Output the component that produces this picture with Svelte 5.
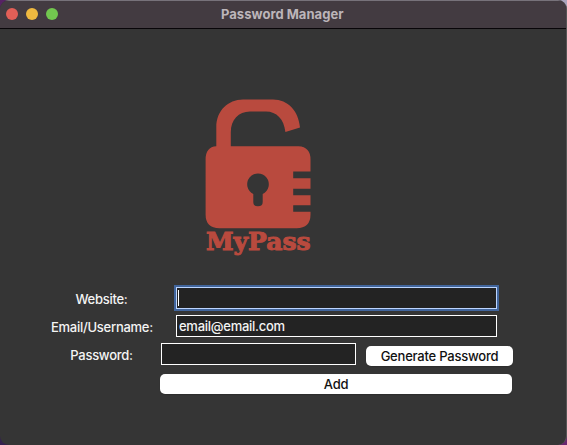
<script>
  let website = $state('');
  let email = $state('email@email.com');
  let password = $state('');
</script>

<div class="desktop">
  <main class="window">
    <header>
      <div class="lights">
        <i class="close"></i><i class="minimise"></i><i class="zoom"></i>
      </div>
      <h1>Password Manager</h1>
    </header>

    <svg class="logo" width="110" height="162" viewBox="203 97 110 162" role="img" aria-label="MyPass">
      <path
        fill="#b94a3e"
        fill-rule="evenodd"
        d="M216.3 146.3V127C216.3 111 228 99.6 243 99.6H273C288 99.6 298.500 111 300 127.500L285.400 132C284 119 276.500 111.500 266 111.500H250C238.500 111.500 230.800 120 230.800 132V146.300H298.500Q310.500 147 310.500 159.500V171.500H293.200V178.300H310.500V188.700H293.200V195.300H310.500V205.300H293.200V211.800H310.500V214.500Q310.500 228.200 296.500 228.200H219.500Q205.600 228.200 205.600 214.500V159.500Q205.600 147 216.300 146.300ZM253.300 194V202Q253.300 206.300 258 206.300T262.700 202V194A10.800 10.800 0 1 0 253.300 194Z"
      />
      <text x="206" y="250.300" textLength="104.500" lengthAdjust="spacingAndGlyphs">MyPass</text>
    </svg>

    <form onsubmit={(e) => e.preventDefault()}>
      <div class="row website">
        <label for="website"><span>Website:</span></label>
        <div class="field focused">
          <span class="caret"></span>
          <input id="website" bind:value={website} />
        </div>
      </div>
      <div class="row email">
        <label for="email"><span>Email/Username:</span></label>
        <div class="field"><input id="email" bind:value={email} /></div>
      </div>
      <div class="row password">
        <label for="password"><span>Password:</span></label>
        <div class="field short"><input id="password" bind:value={password} /></div>
        <button type="button" class="generate">Generate Password</button>
      </div>
      <button class="add">Add</button>
    </form>
  </main>
</div>

<style>
  :global(body) {
    margin: 0;
  }
  .desktop {
    width: 567px;
    height: 445px;
    overflow: hidden;
    background: linear-gradient(50deg, #34204d, #68256f 60%, #a9a4bd 95%);
    font: 500 13px/16px Inter, 'Liberation Sans', sans-serif;
    letter-spacing: -0.27px;
    color: #f4f4f4;
  }
  .window {
    box-sizing: border-box;
    height: 445px;
    display: flex;
    flex-direction: column;
    overflow: hidden;
    border-radius: 9px;
    background: #353535;
    border-right: 1px solid #555;
  }
  header {
    box-sizing: border-box;
    height: 29px;
    flex: none;
    display: flex;
    align-items: center;
    padding-bottom: 1px;
    background: #433b41;
    border-top: 1px solid #77727a;
    border-bottom: 1px solid #080508;
  }
  .lights {
    display: flex;
    gap: 8px;
    width: 52px;
    padding-left: 6px;
    margin-bottom: 1px;
  }
  .lights i {
    width: 12px;
    height: 12px;
    border-radius: 50%;
  }
  .close { background: #e25f57; }
  .minimise { background: #efb940; }
  .zoom { background: #72c74f; }
  h1 {
    margin: 0 0 1px 163px;
    font-size: 13px;
    font-weight: 700;
    line-height: 16px;
    letter-spacing: 0.03px;
    color: #bcb5ba;
    white-space: nowrap;
  }
  .logo {
    flex: none;
    margin: 68px 0 0 203px;
  }
  .logo text {
    font: 700 24px 'DejaVu Serif', serif;
    letter-spacing: 0;
    fill: #b94a3e;
    stroke: #b94a3e;
    stroke-width: 1px;
  }
  form {
    margin-top: 28px;
    display: flex;
    flex-direction: column;
  }
  .row {
    display: flex;
    height: 22px;
  }
  .email { margin-top: 6px; }
  .password { margin-top: 6px; }
  label {
    width: 101px;
    margin-left: 51px;
    padding-top: 4px;
    text-align: center;
    white-space: nowrap;
  }
  .field {
    box-sizing: border-box;
    width: 321px;
    height: 22px;
    margin-left: 24px;
    display: flex;
    align-items: center;
    background: #232323;
    border: 1px solid #fff;
  }
  .focused {
    border-color: #bcd5ff;
    box-shadow: 0 0 0 2px #41659c;
  }
  .short {
    width: 195px;
    margin-left: 9px;
  }
  .caret {
    width: 1px;
    height: 16px;
    margin-left: 1px;
    background: #fff;
  }
  input {
    flex: 1;
    min-width: 0;
    padding: 0 2px;
    border: 0;
    outline: 0;
    background: none;
    font: inherit;
    letter-spacing: inherit;
    color: inherit;
  }
  button {
    height: 20px;
    padding: 0;
    border: 0;
    border-radius: 5px;
    background: #fff;
    color: #111;
    font: inherit;
    letter-spacing: -0.22px;
    white-space: nowrap;
    box-shadow: 0 1px 1px #2226;
  }
  .generate {
    width: 147px;
    margin: 3px 0 0 10px;
    padding-bottom: 1px;
  }
  .add {
    width: 352px;
    margin: 9px 0 0 160px;
    padding-bottom: 1px;
  }
</style>
